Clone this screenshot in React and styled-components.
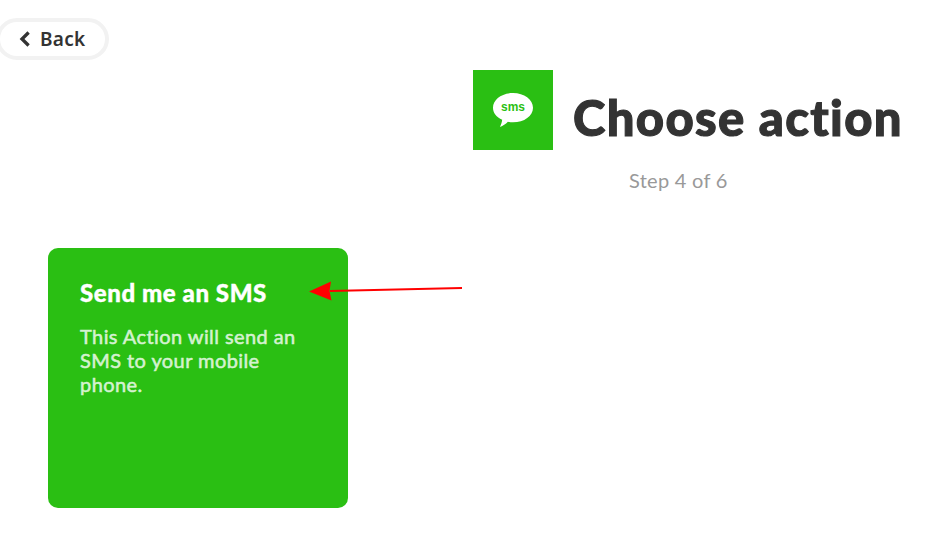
import React from "react";
import styled, { createGlobalStyle } from "styled-components";

const GlobalStyle = createGlobalStyle`
  * { box-sizing: border-box; }
  html, body { margin: 0; background: #fff; overflow: hidden; }
  body {
    font-family: Lato, "Open Sans", sans-serif;
    font-variant-ligatures: none;
    color: #333;
  }
`;

const Page = styled.main`
  position: relative;
  width: 938px;
  height: 548px;
  padding-top: 18px;
  overflow: hidden;
`;

const BackButton = styled.button`
  display: flex;
  align-items: center;
  gap: 9px;
  width: 113px;
  height: 42px;
  margin-left: -4px;
  padding: 0 0 0 19px;
  border: 4px solid #f2f2f2;
  border-radius: 21px;
  background: #fff;
  color: #333;
  font: 600 19px/24px "Noto Sans", sans-serif;
  letter-spacing: 0.25px;
`;

const Header = styled.header`
  display: flex;
  align-items: flex-start;
  gap: 20px;
  height: 80px;
  margin: 10px 0 0 473px;
`;

const ServiceTile = styled.div`
  flex: none;
  width: 80px;
  height: 80px;
  background: #2abf13;
`;

const Title = styled.h1`
  margin: 17px 0 0;
  font-size: 49px;
  font-weight: 900;
  line-height: 60px;
  letter-spacing: 1.35px;
  -webkit-text-stroke: 1.1px #333;
  white-space: nowrap;
`;

const Step = styled.p`
  margin: 18px 0 0 629px;
  color: #999;
  font-size: 20px;
  line-height: 24px;
  letter-spacing: 0.27px;
  white-space: nowrap;
`;

const ActionCard = styled.section`
  width: 300px;
  height: 260px;
  margin: 56px 0 0 48px;
  padding: 30px 32px;
  border-radius: 10px;
  background: #2abf13;
`;

const CardTitle = styled.h2`
  margin: 0;
  color: #fff;
  font-size: 24px;
  font-weight: 900;
  line-height: 30px;
  letter-spacing: 0.58px;
  -webkit-text-stroke: 0.4px #fff;
  white-space: nowrap;
`;

const CardText = styled.p`
  margin: 16px 0 0;
  color: #d4f2d0;
  font-size: 20px;
  line-height: 24px;
  letter-spacing: 0.42px;
  -webkit-text-stroke: 0.55px #d4f2d0;
`;

const Line = styled.span`
  display: block;
  white-space: nowrap;
`;

const Arrow = styled.svg`
  position: absolute;
  left: 306px;
  top: 278px;
`;

const SmsLabel = styled.text`
  font: 700 13px "Liberation Sans", sans-serif;
  fill: #2abf13;
`;

export default function App() {
  return (
    <>
      <GlobalStyle />
      <Page>
        <BackButton>
          <svg width="12" height="16" viewBox="0 0 12 16">
            <path d="M9.6 1.5 3 8l6.6 6.5" fill="none" stroke="#333" strokeWidth="3.3" />
          </svg>
          <span>Back</span>
        </BackButton>
        <Header>
          <ServiceTile>
            <svg width="80" height="80" viewBox="0 0 80 80">
              <path
                d="M40 23c11.2 0 20 6.500 20 14.700s-8.800 14.600-20 14.600c-1.800 0-3.500-.1-5.100-.5-2.400 2.300-4.800 4.100-7.900 5.200 1.200-2.500 1.900-4.700 2.200-7.200C23.500 47.200 20 42.800 20 37.700 20 29.500 28.800 23 40 23z"
                fill="#fff"
              />
              <SmsLabel x="40" y="40.5" textAnchor="middle" textLength="24" lengthAdjust="spacingAndGlyphs">sms</SmsLabel>
            </svg>
          </ServiceTile>
          <Title>Choose action</Title>
        </Header>
        <Step>Step 4 of 6</Step>
        <ActionCard>
          <CardTitle>Send me an SMS</CardTitle>
          <CardText>
            <Line>This Action will send an</Line>
            <Line>SMS to your mobile</Line>
            <Line>phone.</Line>
          </CardText>
        </ActionCard>
        <Arrow width="160" height="28" viewBox="0 0 160 28">
          <path d="M24 13 156 10" stroke="#f00" strokeWidth="2" fill="none" />
          <path d="M3 13.500 25 3.500 23.500 13 25.500 22.500z" fill="#f00" />
        </Arrow>
      </Page>
    </>
  );
}
